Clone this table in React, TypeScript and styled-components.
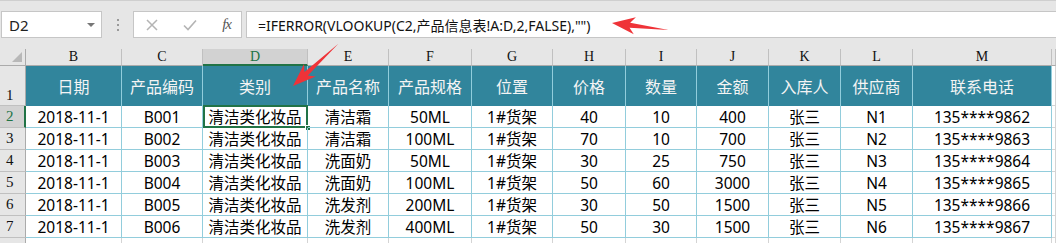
import * as React from 'react';
import styled, { createGlobalStyle } from 'styled-components';

const GlobalStyle = createGlobalStyle`
  html, body {
    margin: 0;
    padding: 0;
    background: #ffffff;
    overflow: hidden;
  }
`;

const UI_FONT = `"Noto Sans", "Noto Sans CJK SC", sans-serif`;
const HEAD_FONT = `"Liberation Serif", "DejaVu Serif", serif`;
const GREEN = '#217346';
const TEAL = '#31859c';
const GRID_BLUE = '#92cddc';

const Window = styled.div`
  position: relative;
  width: 1056px;
  height: 243px;
  overflow: hidden;
  background: #e6e6e6;
  border-top: 1px solid #cfcfcf;
  box-sizing: border-box;
  font-family: ${UI_FONT};
`;

const FormulaRow = styled.div`
  display: flex;
  align-items: stretch;
  height: 27px;
  margin-top: 10px;
  margin-bottom: 11px;
`;

const Box = styled.div`
  display: flex;
  align-items: center;
  background: #ffffff;
  border: 1px solid #c6c6c6;
  box-sizing: border-box;
`;

const NameBox = styled(Box)`
  width: 101px;
  margin-left: 1px;
  padding: 0 6px 0 7px;
  justify-content: space-between;
  font-size: 15px;
  color: #222;
`;

const DropTriangle = styled.span`
  width: 0;
  height: 0;
  border-left: 4px solid transparent;
  border-right: 4px solid transparent;
  border-top: 4px solid #777;
`;

const Grip = styled.div`
  width: 31px;
  display: flex;
  flex-direction: column;
  align-items: center;
  justify-content: center;
  gap: 3px;
  span {
    width: 2px;
    height: 2px;
    background: #9a9a9a;
  }
`;

const ButtonBox = styled(Box)`
  width: 109px;
  justify-content: space-between;
  padding: 0 10px 0 12px;
  margin-right: 4px;
`;

const FxLabel = styled.span`
  font-family: ${HEAD_FONT};
  font-style: italic;
  font-size: 15px;
  color: #555;
  letter-spacing: -1px;
`;

const FormulaInput = styled(Box)`
  flex: 1;
  padding-left: 11px;
  border-right: none;
  font-size: 14px;
  color: #111;
  white-space: nowrap;
`;

const Sheet = styled.div`
  display: grid;
  grid-template-columns: 26px 96px 81px 105px 81px 83px 81px 73px 71px 72px 72px 72px 139px 1fr;
  grid-template-rows: 17px 40px repeat(7, 22px);
  background: #ffffff;
`;

const Corner = styled.div`
  position: relative;
  background: #e6e6e6;
  border-right: 1px solid #ababab;
  border-bottom: 1px solid #ababab;
  box-sizing: border-box;
  &::after {
    content: '';
    position: absolute;
    right: 3px;
    bottom: 3px;
    width: 0;
    height: 0;
    border-left: 10px solid transparent;
    border-bottom: 10px solid #b8b8b8;
  }
`;

const ColLetter = styled.div<{ $active?: boolean }>`
  display: flex;
  align-items: center;
  justify-content: center;
  box-sizing: border-box;
  background: ${p => (p.$active ? '#d2d2d2' : '#e6e6e6')};
  border-right: 1px solid #c0c0c0;
  border-bottom: ${p => (p.$active ? `2px solid ${GREEN}` : '1px solid #ababab')};
  font-family: ${HEAD_FONT};
  font-size: 14px;
  color: ${p => (p.$active ? GREEN : '#111')};
`;

const RowNum = styled.div<{ $active?: boolean; $tall?: boolean }>`
  display: flex;
  align-items: ${p => (p.$tall ? 'flex-end' : 'center')};
  justify-content: flex-start;
  padding-left: 6px;
  padding-bottom: ${p => (p.$tall ? '1px' : '0')};
  box-sizing: border-box;
  background: ${p => (p.$active ? '#d2d2d2' : '#e6e6e6')};
  border-right: ${p => (p.$active ? `2px solid ${GREEN}` : '1px solid #ababab')};
  border-bottom: 1px solid #c0c0c0;
  font-family: ${HEAD_FONT};
  font-size: 15px;
  color: ${p => (p.$active ? GREEN : '#111')};
`;

const HeadCell = styled.div`
  display: flex;
  align-items: center;
  justify-content: center;
  box-sizing: border-box;
  background: ${TEAL};
  border-right: 1px solid ${GRID_BLUE};
  font-size: 16px;
  color: #f4f4f4;
  white-space: nowrap;
`;

const Cell = styled.div<{ $selected?: boolean }>`
  position: relative;
  display: flex;
  align-items: center;
  justify-content: center;
  box-sizing: border-box;
  border-right: 1px solid ${GRID_BLUE};
  border-bottom: 1px solid ${GRID_BLUE};
  font-size: 15.5px;
  color: #000;
  white-space: nowrap;
  ${p =>
    p.$selected &&
    `
    &::before {
      content: '';
      position: absolute;
      left: 0;
      top: -1px;
      right: -1px;
      bottom: -1px;
      border: 2px solid ${GREEN};
    }
    &::after {
      content: '';
      position: absolute;
      right: -4px;
      bottom: -4px;
      width: 6px;
      height: 6px;
      background: ${GREEN};
      border: 1px solid #fff;
      box-sizing: border-box;
    }
  `}
`;

const BlankCell = styled.div`
  box-sizing: border-box;
  border-right: 1px solid #d4d4d4;
  border-bottom: 1px solid #d4d4d4;
  background: #fff;
`;

const Overlay = styled.svg`
  position: absolute;
  left: 0;
  top: 0;
  pointer-events: none;
`;

const letters = ['B', 'C', 'D', 'E', 'F', 'G', 'H', 'I', 'J', 'K', 'L', 'M'];
const headers = ['日期', '产品编码', '类别', '产品名称', '产品规格', '位置', '价格', '数量', '金额', '入库人', '供应商', '联系电话'];
const rows = [
  ['2018-11-1', 'B001', '清洁类化妆品', '清洁霜', '50ML', '1#货架', '40', '10', '400', '张三', 'N1', '135****9862'],
  ['2018-11-1', 'B002', '清洁类化妆品', '清洁霜', '100ML', '1#货架', '70', '10', '700', '张三', 'N2', '135****9863'],
  ['2018-11-1', 'B003', '清洁类化妆品', '洗面奶', '50ML', '1#货架', '30', '25', '750', '张三', 'N3', '135****9864'],
  ['2018-11-1', 'B004', '清洁类化妆品', '洗面奶', '100ML', '1#货架', '50', '60', '3000', '张三', 'N4', '135****9865'],
  ['2018-11-1', 'B005', '清洁类化妆品', '洗发剂', '200ML', '1#货架', '30', '50', '1500', '张三', 'N5', '135****9866'],
  ['2018-11-1', 'B006', '清洁类化妆品', '洗发剂', '400ML', '1#货架', '50', '30', '1500', '张三', 'N6', '135****9867'],
];

// red callout arrow, tip at origin, tail along +x
const Arrow = ({ x, y, angle, length }: { x: number; y: number; angle: number; length: number }) => (
  <polygon
    transform={`translate(${x} ${y}) rotate(${angle})`}
    points={`0,0 23,-8.5 18,-2.5 ${length},0 18,2.5 23,8.5`}
    fill="#ef3338"
  />
);

export default function App() {
  return (
    <Window>
      <GlobalStyle />
      <FormulaRow>
        <NameBox>
          <span>D2</span>
          <DropTriangle />
        </NameBox>
        <Grip>
          <span />
          <span />
          <span />
        </Grip>
        <ButtonBox>
          <svg width="12" height="12" viewBox="0 0 12 12">
            <path d="M1 1 L11 11 M11 1 L1 11" stroke="#b4b4b4" strokeWidth="1.5" fill="none" />
          </svg>
          <svg width="14" height="12" viewBox="0 0 14 12">
            <path d="M1 6.5 L5 10.5 L13 1.5" stroke="#b4b4b4" strokeWidth="1.6" fill="none" />
          </svg>
          <FxLabel>fx</FxLabel>
        </ButtonBox>
        <FormulaInput>=IFERROR(VLOOKUP(C2,产品信息表!A:D,2,FALSE),"")</FormulaInput>
      </FormulaRow>

      <Sheet>
        <Corner />
        {letters.map(l => (
          <ColLetter key={l} $active={l === 'D'}>{l}</ColLetter>
        ))}
        <ColLetter />

        <RowNum $tall>1</RowNum>
        {headers.map(h => (
          <HeadCell key={h}>{h}</HeadCell>
        ))}
        <BlankCell />

        {rows.map((r, i) => (
          <React.Fragment key={i}>
            <RowNum $active={i === 0}>{i + 2}</RowNum>
            {r.map((v, j) => (
              <Cell key={j} $selected={i === 0 && j === 2}>{v}</Cell>
            ))}
            <BlankCell />
          </React.Fragment>
        ))}

        <RowNum />
        {letters.map(l => (
          <BlankCell key={l} />
        ))}
        <BlankCell />
      </Sheet>

      <Overlay width="1056" height="243">
        <Arrow x={293} y={85} angle={-43} length={62} />
        <Arrow x={612} y={22} angle={7} length={57} />
      </Overlay>
    </Window>
  );
}
